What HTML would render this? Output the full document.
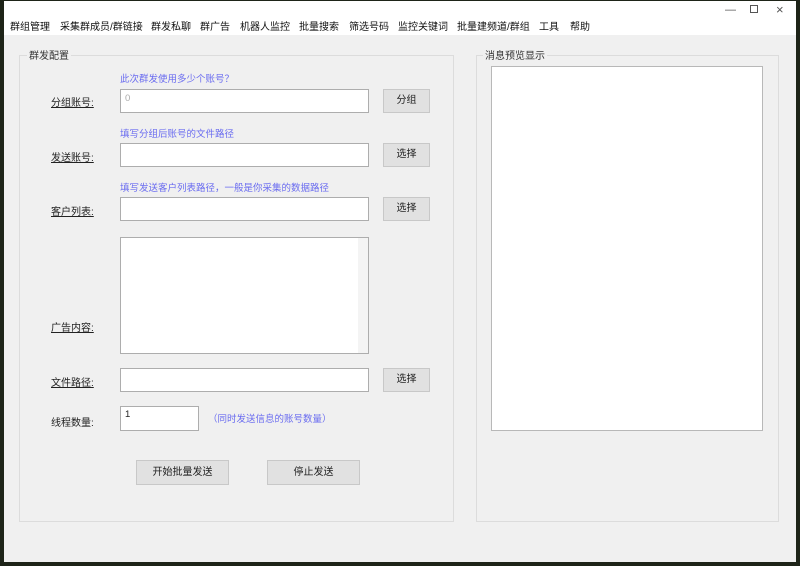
<!DOCTYPE html>
<html><head><meta charset="utf-8"><style>
*{margin:0;padding:0;box-sizing:border-box}
body{width:800px;height:566px;background:#1e2418;position:relative;overflow:hidden;font-family:"Liberation Sans","Noto Sans CJK SC",sans-serif;font-size:10px;color:#222}
#win{position:absolute;left:4px;top:1px;width:792px;height:561px;background:#f0f0f0}
#top{position:absolute;left:0;top:0;width:792px;height:34px;background:#fff}
.menu{position:absolute;top:17px;font-size:10px;color:#111}
.ab{position:absolute}
.box{position:absolute;border:1px solid #dcdcdc}
.gt{position:absolute;background:#f0f0f0;padding:0 2px;font-size:10px;color:#333}
.lbl{position:absolute;font-size:10px;color:#222;text-decoration:underline}
.hint{position:absolute;font-size:9.5px;color:#6a6cf0}
.inp{position:absolute;background:#fff;border:1px solid #adadad}
.btn{position:absolute;background:#e1e1e1;border:1px solid #c8c8c8;text-align:center;font-size:10px;color:#222}
</style></head><body>
<div id="win">
<div id="top">
<span class="menu" style="left:6px">群组管理</span>
<span class="menu" style="left:56px">采集群成员/群链接</span>
<span class="menu" style="left:147px">群发私聊</span>
<span class="menu" style="left:196px">群广告</span>
<span class="menu" style="left:236px">机器人监控</span>
<span class="menu" style="left:295px">批量搜索</span>
<span class="menu" style="left:345px">筛选号码</span>
<span class="menu" style="left:394px">监控关键词</span>
<span class="menu" style="left:453px">批量建频道/群组</span>
<span class="menu" style="left:535px">工具</span>
<span class="menu" style="left:566px">帮助</span>
<span class="ab" style="left:721px;top:3px;color:#555;font-size:11px">—</span>
<span class="ab" style="left:746px;top:4px;width:8px;height:8px;border:1px solid #555"></span>
<span class="ab" style="left:772px;top:1px;color:#555;font-size:13px">×</span>
</div>
<div class="box" style="left:15px;top:54px;width:435px;height:467px"></div>
<span class="gt" style="left:23px;top:46px">群发配置</span>
<div class="box" style="left:472px;top:54px;width:303px;height:467px"></div>
<span class="gt" style="left:479px;top:46px">消息预览显示</span>
<div class="inp" style="left:487px;top:65px;width:272px;height:365px;border-color:#b8b8b8"></div>

<span class="hint" style="left:116px;top:70px">此次群发使用多少个账号？</span>
<span class="lbl" style="left:47px;top:93px">分组账号:</span>
<div class="inp" style="left:116px;top:88px;width:249px;height:24px"><span style="position:absolute;left:4px;top:3px;color:#aaa;font-size:9.5px">0</span></div>
<div class="btn" style="left:379px;top:88px;width:47px;height:24px;line-height:22px">分组</div>

<span class="hint" style="left:116px;top:125px">填写分组后账号的文件路径</span>
<span class="lbl" style="left:47px;top:148px">发送账号:</span>
<div class="inp" style="left:116px;top:142px;width:249px;height:24px"></div>
<div class="btn" style="left:379px;top:142px;width:47px;height:24px;line-height:22px">选择</div>

<span class="hint" style="left:116px;top:179px">填写发送客户列表路径，一般是你采集的数据路径</span>
<span class="lbl" style="left:47px;top:202px">客户列表:</span>
<div class="inp" style="left:116px;top:196px;width:249px;height:24px"></div>
<div class="btn" style="left:379px;top:196px;width:47px;height:24px;line-height:22px">选择</div>

<span class="lbl" style="left:47px;top:318px">广告内容:</span>
<div class="inp" style="left:116px;top:236px;width:249px;height:117px"><div class="ab" style="right:0;top:0;width:10px;height:115px;background:#f4f4f4"></div></div>

<span class="lbl" style="left:47px;top:373px">文件路径:</span>
<div class="inp" style="left:116px;top:367px;width:249px;height:24px"></div>
<div class="btn" style="left:379px;top:367px;width:47px;height:24px;line-height:22px">选择</div>

<span class="ab" style="left:47px;top:413px">线程数量:</span>
<div class="inp" style="left:116px;top:405px;width:79px;height:25px"><span style="position:absolute;left:4px;top:2px;font-size:9.5px">1</span></div>
<span class="hint" style="left:204px;top:410px">（同时发送信息的账号数量）</span>

<div class="btn" style="left:132px;top:459px;width:93px;height:25px;line-height:23px">开始批量发送</div>
<div class="btn" style="left:263px;top:459px;width:93px;height:25px;line-height:23px">停止发送</div>
</div>
</body></html>
